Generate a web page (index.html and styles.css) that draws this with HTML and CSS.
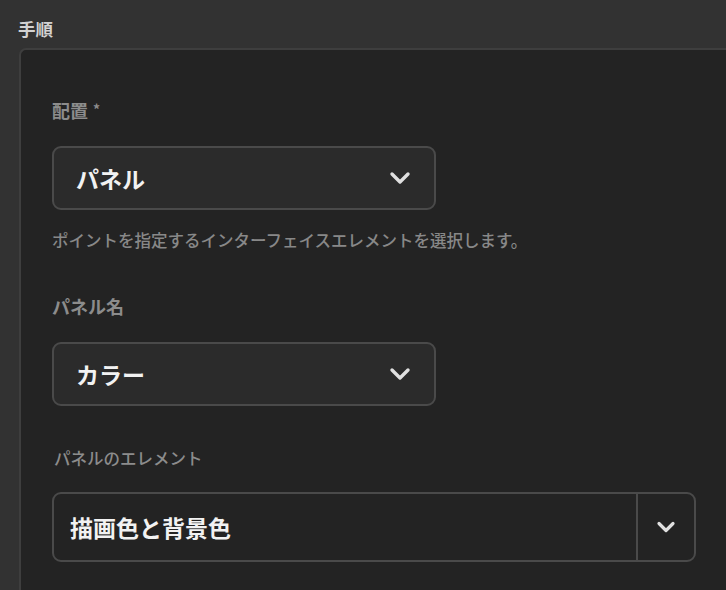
FILE: index.html
```html
<!DOCTYPE html>
<html lang="ja">
<head>
<meta charset="utf-8">
<link rel="stylesheet" href="styles.css">
</head>
<body>
<div class="page">
  <div class="section-title">手順</div>
  <div class="panel">
    <div class="field field-help">
      <div class="label">配置 <span class="req">*</span></div>
      <div class="select">
        <span class="value">パネル</span>
        <svg class="chev" width="22" height="14" viewBox="0 0 22 14"><path d="M3 3 L11 11 L19 3" fill="none" stroke="#e0e0e0" stroke-width="3.4" stroke-linecap="round" stroke-linejoin="round"/></svg>
      </div>
      <div class="help">ポイントを指定するインターフェイスエレメントを選択します。</div>
    </div>
    <div class="field">
      <div class="label">パネル名</div>
      <div class="select">
        <span class="value">カラー</span>
        <svg class="chev" width="22" height="14" viewBox="0 0 22 14"><path d="M3 3 L11 11 L19 3" fill="none" stroke="#e0e0e0" stroke-width="3.4" stroke-linecap="round" stroke-linejoin="round"/></svg>
      </div>
    </div>
    <div class="field">
      <div class="label light">パネルのエレメント</div>
      <div class="combo">
        <span class="combo-value">描画色と背景色</span>
        <span class="combo-btn">
          <svg width="20" height="12" viewBox="0 0 20 12"><path d="M3 2.5 L10 9.5 L17 2.5" fill="none" stroke="#e0e0e0" stroke-width="3.2" stroke-linecap="round" stroke-linejoin="round"/></svg>
        </span>
      </div>
    </div>
  </div>
</div>
</body>
</html>
```
FILE: styles.css
```css
html, body {
  margin: 0;
  padding: 0;
  background: #323232;
  font-family: "Noto Sans CJK JP", "Noto Sans", sans-serif;
  overflow: hidden;
}
.page {
  padding: 18px 0 0 19px;
  height: 590px;
  box-sizing: border-box;
  display: flex;
  flex-direction: column;
}
.section-title {
  color: #d2d2d2;
  font-size: 17.5px;
  font-weight: 700;
  line-height: 22px;
  margin-bottom: 8px;
  margin-left: -1px;
}
.panel {
  flex: 1;
  background: #232323;
  border: 2px solid #3e3e3e;
  border-right: none;
  border-bottom: none;
  border-radius: 7px 0 0 0;
  padding: 47px 0 0 31px;
}
.field {
  margin-bottom: 40px;
}
.field-help {
  margin-bottom: 43px;
}
.label {
  color: #8c8c8c;
  font-size: 18px;
  font-weight: 700;
  line-height: 24px;
  margin-bottom: 24px;
}
.label.light {
  font-size: 16.5px;
  font-weight: 500;
  margin-left: 2px;
  margin-bottom: 22px;
}
.req {
  font-size: 14px;
  vertical-align: 3px;
  margin-left: 1px;
}
.select {
  box-sizing: border-box;
  width: 384px;
  height: 64px;
  border: 2px solid #4a4a4a;
  border-radius: 9px;
  background: #2b2b2b;
  display: flex;
  align-items: center;
  justify-content: space-between;
  padding: 0 23px 0 22px;
}
.value {
  color: #f2f2f2;
  font-size: 23px;
  font-weight: 700;
}
.chev { display: block; }
.help {
  color: #888;
  font-size: 16.5px;
  font-weight: 500;
  line-height: 22px;
  margin-top: 19px;
}
.combo {
  box-sizing: border-box;
  width: 644px;
  height: 70px;
  border: 2px solid #4a4a4a;
  border-radius: 9px;
  background: #232323;
  display: flex;
  align-items: stretch;
}
.combo-value {
  flex: 1;
  display: flex;
  align-items: center;
  padding-left: 16px;
  color: #f2f2f2;
  font-size: 23px;
  font-weight: 700;
}
.combo-btn {
  width: 56px;
  border-left: 2px solid #4a4a4a;
  display: flex;
  align-items: center;
  justify-content: center;
}
```
